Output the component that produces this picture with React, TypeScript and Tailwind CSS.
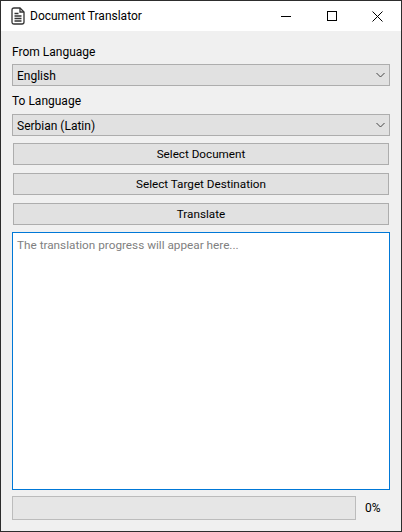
import React from "react";

function Combo({ label }: { label: string }) {
  return (
    <div className="flex h-[22px] items-center justify-between border border-[#adadad] bg-[#e1e1e1] pl-[4px] pr-[4px] text-[12px] text-black">
      <span className="pt-px">{label}</span>
      <svg width="9" height="6" viewBox="0 0 9 6" fill="none" stroke="#444" strokeWidth="1">
        <path d="M0.5 1 L4.5 5 L8.5 1" />
      </svg>
    </div>
  );
}

function Btn({ label }: { label: string }) {
  return (
    <div className="mx-px flex h-[22px] items-center justify-center border border-[#adadad] bg-[#e1e1e1] pt-px text-[11.7px] text-black">
      {label}
    </div>
  );
}

export default function App() {
  return (
    <div className="flex h-[532px] w-[402px] flex-col overflow-hidden border border-[#2d2d2d] bg-[#f0f0f0] font-['Roboto','Noto_Sans',sans-serif] text-[12px] leading-none text-black">
      <div className="flex h-[30px] shrink-0 items-center bg-white pl-[10px]">
        <svg width="14" height="18" viewBox="0 0 14 18" fill="none" stroke="#333" strokeWidth="1.3">
          <path d="M1 3 Q1 1 3 1 H9 L13 5 V15 Q13 17 11 17 H3 Q1 17 1 15 Z" />
          <path d="M9 1 V5 H13" />
          <path d="M3.5 6.5 H7.5 M3.5 9 H10.5 M3.5 11.5 H10.5 M3.5 14 H10.5" />
        </svg>
        <span className="ml-[5px] text-[12px]">Document Translator</span>
        <div className="ml-auto flex items-center">
          <div className="flex h-[30px] w-[46px] items-center justify-center">
            <svg width="10" height="10" viewBox="0 0 10 10" stroke="#000" strokeWidth="1" fill="none"><path d="M0 5.5 H10" /></svg>
          </div>
          <div className="flex h-[30px] w-[46px] items-center justify-center">
            <svg width="10" height="10" viewBox="0 0 10 10" stroke="#000" strokeWidth="1" fill="none"><rect x="0.5" y="0.5" width="9" height="9" /></svg>
          </div>
          <div className="flex h-[30px] w-[46px] items-center justify-center pr-[2px]">
            <svg width="11" height="11" viewBox="0 0 11 11" stroke="#000" strokeWidth="1" fill="none"><path d="M0.5 0.5 L10.5 10.5 M10.5 0.5 L0.5 10.5" /></svg>
          </div>
        </div>
      </div>
      <div className="flex min-h-0 flex-1 flex-col px-[11px] pt-[12px] pb-[11px]">
        <div className="flex h-[17px] items-center">From Language</div>
        <div className="mt-[4px]"><Combo label="English" /></div>
        <div className="mt-[6px] flex h-[17px] items-center">To Language</div>
        <div className="mt-[5px]"><Combo label="Serbian (Latin)" /></div>
        <div className="mt-[7px]"><Btn label="Select Document" /></div>
        <div className="mt-[8px]"><Btn label="Select Target Destination" /></div>
        <div className="mt-[8px]"><Btn label="Translate" /></div>
        <div className="mt-[7px] min-h-0 flex-1 border border-[#0078d7] bg-white px-[4px] pt-[7px] text-[11.75px] text-[#808080]">
          The translation progress will appear here...
        </div>
        <div className="mt-[6px] flex h-[24px] items-center">
          <div className="h-full w-[344px] border border-[#bcbcbc] bg-[#e6e6e6]" />
          <span className="ml-[9px]">0%</span>
        </div>
      </div>
    </div>
  );
}
